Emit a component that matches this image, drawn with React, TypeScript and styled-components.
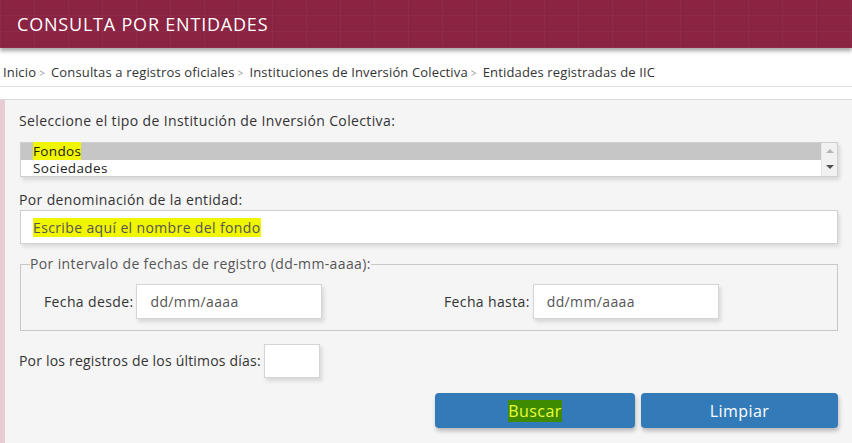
import React from "react";
import styled, { createGlobalStyle } from "styled-components";

const Global = createGlobalStyle`
    html, body {
        margin: 0;
        padding: 0;
        background: #fff;
        font-family: "Open Sans", "Liberation Sans", sans-serif;
        color: #333;
    }
`

const Header = styled.div`
    height: 48px;
    background-color: #8b2343;
    background-image:
        repeating-linear-gradient(90deg, rgba(255,255,255,0.035) 0 1px, transparent 1px 34px),
        repeating-linear-gradient(0deg, rgba(255,255,255,0.03) 0 1px, transparent 1px 16px);
    box-shadow: 0 3px 4px rgba(0, 0, 0, 0.35);
    display: flex;
    align-items: center;
    padding-left: 17px;
    position: relative;
    z-index: 1;
`

const Title = styled.h1`
    margin: 0;
    font-size: 18px;
    font-weight: 400;
    color: #fff;
    letter-spacing: 0.8px;
`

const Breadcrumb = styled.nav`
    height: 39px;
    padding: 16px 0 0 3px;
    border-bottom: 1px solid #e0e0e0;
    box-sizing: border-box;
    line-height: 16px;
    font-size: 13px;
    letter-spacing: 0.15px;
    color: #333;
`

const Sep = styled.span`
    color: #999;
    font-size: 10px;
    margin: 0 6px 0 3px;
`

const Panel = styled.div`
    margin-top: 12px;
    background: #f5f5f5;
    border-top: 1px solid #dcdcdc;
    border-left: 5px solid #e8cbd3;
    padding: 12px 14px 20px 15px;
    min-height: 344px;
    box-sizing: border-box;
    font-size: 14px;
    letter-spacing: 0.37px;
`

const Label = styled.div<{ $top?: number; $tight?: boolean }>`
    line-height: 18px;
    color: #333;
    margin-left: -1px;
    margin-top: ${p => p.$top ?? 0}px;
    letter-spacing: ${p => (p.$tight ? "0.2px" : "inherit")};
`

const ListBox = styled.div`
    margin-top: 12px;
    height: 35px;
    background: #fff;
    border: 1px solid #d0d0d0;
    box-shadow: 2px 3px 4px rgba(0, 0, 0, 0.12);
    display: flex;
    box-sizing: border-box;
`

const Options = styled.div`
    flex: 1;
    display: flex;
    flex-direction: column;
`

const Option = styled.div<{ $selected?: boolean }>`
    height: 16.5px;
    line-height: 16.5px;
    padding-left: 12px;
    font-size: 13.5px;
    color: #222;
    background: ${p => (p.$selected ? "#c6c6c6" : "#fff")};
`

const Scroll = styled.div`
    width: 16px;
    background: #f1f1f1;
    border-left: 1px solid #e6e6e6;
    display: flex;
    flex-direction: column;
    align-items: center;
    justify-content: space-between;
    padding: 6px 0 7px;
    box-sizing: border-box;
`

const Arrow = styled.div<{ $down?: boolean; $dim?: boolean }>`
    width: 0;
    height: 0;
    border-left: 4px solid transparent;
    border-right: 4px solid transparent;
    ${p => (p.$down ? `border-top: 4px solid` : `border-bottom: 4px solid`)} ${p => (p.$dim ? "#b5b5b5" : "#505050")};
`

const Highlight = styled.span`
    background: #f0f500;
`

const TextInput = styled.div`
    height: 34px;
    margin-top: 1px;
    background: #fff;
    border: 1px solid #d0d0d0;
    box-shadow: 2px 3px 4px rgba(0, 0, 0, 0.1);
    display: flex;
    align-items: center;
    padding-left: 12px;
    color: #555;
    box-sizing: border-box;
`

const Fieldset = styled.fieldset`
    margin: 11px 0 0;
    padding: 11px 10px 11px 23px;
    border: 1px solid #c8c8c8;
    display: flex;
    align-items: center;
`

const Legend = styled.legend`
    padding: 0;
    margin-left: -14px;
    line-height: 18px;
    color: #555;
`

const DateGroup = styled.div<{ $width: number }>`
    display: flex;
    align-items: center;
    width: ${p => p.$width}px;
    color: #333;
`

const Field = styled.div<{ $w: number; $h?: number }>`
    width: ${p => p.$w}px;
    height: ${p => p.$h ?? 35}px;
    margin-left: 3px;
    background: #fff;
    border: 1px solid #d5d5d5;
    box-shadow: 2px 3px 4px rgba(0, 0, 0, 0.12);
    display: flex;
    align-items: center;
    padding-left: 13px;
    box-sizing: border-box;
    color: #555;
`

const DaysRow = styled.div`
    display: flex;
    align-items: center;
    margin-top: 13px;
`

const Buttons = styled.div`
    display: flex;
    justify-content: flex-end;
    gap: 6px;
    margin-top: 15px;
`

const Button = styled.button<{ $w: number }>`
    width: ${p => p.$w}px;
    height: 35px;
    border: none;
    border-radius: 4px;
    background: #337ab9;
    color: #fff;
    font-family: inherit;
    font-size: 16px;
    letter-spacing: 0.4px;
    box-shadow: 1px 3px 4px rgba(0, 0, 0, 0.25);
    cursor: pointer;
`

const Marked = styled.span`
    background: #3e8a00;
    color: #eaff3a;
`

const crumbs = [
    "Inicio",
    "Consultas a registros oficiales",
    "Instituciones de Inversión Colectiva",
    "Entidades registradas de IIC",
]

export default function App() {
    return (
        <>
            <Global />
            <Header>
                <Title>CONSULTA POR ENTIDADES</Title>
            </Header>
            <Breadcrumb>
                {crumbs.map((c, i) => (
                    <React.Fragment key={c}>
                        <span>{c}</span>
                        {i < crumbs.length - 1 && <Sep>&gt;</Sep>}
                    </React.Fragment>
                ))}
            </Breadcrumb>
            <Panel>
                <Label>Seleccione el tipo de Institución de Inversión Colectiva:</Label>
                <ListBox>
                    <Options>
                        <Option $selected><Highlight>Fondos</Highlight></Option>
                        <Option>Sociedades</Option>
                    </Options>
                    <Scroll>
                        <Arrow $dim />
                        <Arrow $down />
                    </Scroll>
                </ListBox>
                <Label $top={14}>Por denominación de la entidad:</Label>
                <TextInput><Highlight>Escribe aquí el nombre del fondo</Highlight></TextInput>
                <Fieldset>
                    <Legend>Por intervalo de fechas de registro (dd-mm-aaaa):</Legend>
                    <DateGroup $width={400}>
                        Fecha desde:
                        <Field $w={186}>dd/mm/aaaa</Field>
                    </DateGroup>
                    <DateGroup $width={300}>
                        Fecha hasta:
                        <Field $w={186}>dd/mm/aaaa</Field>
                    </DateGroup>
                </Fieldset>
                <DaysRow>
                    <Label $tight>Por los registros de los últimos días:</Label>
                    <Field $w={56} $h={34} />
                </DaysRow>
                <Buttons>
                    <Button $w={200}><Marked>Buscar</Marked></Button>
                    <Button $w={197}>Limpiar</Button>
                </Buttons>
            </Panel>
        </>
    )
}
